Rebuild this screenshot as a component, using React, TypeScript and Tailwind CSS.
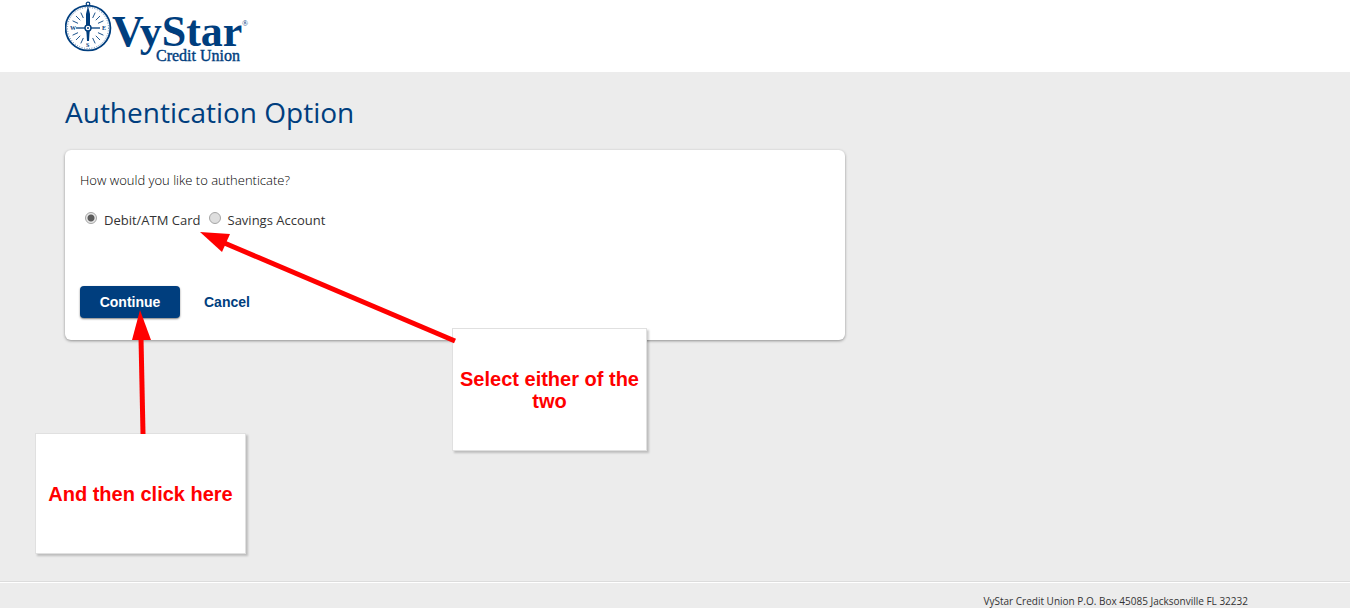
import { useState } from "react";

const options = [
  { id: "card", label: "Debit/ATM Card" },
  { id: "savings", label: "Savings Account" },
];

// Short ticks between the compass points
const ticks = [25, 45, 65, 115, 135, 155, 205, 225, 245, 295, 315, 335];

function Logo() {
  return (
    <svg
      width="186"
      height="64"
      viewBox="0 0 186 64"
      role="img"
      aria-label="VyStar Credit Union"
      fill="#003e7e"
    >
      <g fill="none" stroke="#003e7e">
        <circle cx="23" cy="28" r="22.4" strokeWidth="1.8" />
        <circle cx="23" cy="28" r="20.5" strokeWidth="1" strokeOpacity="0.6" strokeDasharray="1 1.5" />
        <circle cx="23" cy="4" r="1.8" strokeWidth="1.2" />
        {ticks.map((angle) => (
          <path
            key={angle}
            d="M23 11v6"
            strokeWidth="0.8"
            transform={`rotate(${angle} 23 28)`}
          />
        ))}
        <path d="M11 28h24" strokeWidth="1.3" />
      </g>
      <path d="M23 6l2 8v12l-1 15h-2l-1-15v-12z" />
      <circle cx="23" cy="28" r="3" fill="#fff" stroke="#003e7e" strokeWidth="1.4" />
      <circle cx="23" cy="28" r="1" />
      <g className="font-['Liberation_Serif',serif] font-bold">
        <text x="5" y="30" fontSize="6">W</text>
        <text x="37" y="30" fontSize="6">E</text>
        <text x="21" y="47" fontSize="6">S</text>
        <text x="47" y="46" fontSize="44">VyStar</text>
      </g>
      <g className="font-['Liberation_Serif',serif]">
        <text x="91" y="61" fontSize="16" stroke="#003e7e" strokeWidth="0.4">
          Credit Union
        </text>
        <text x="177" y="26" fontSize="8">®</text>
      </g>
    </svg>
  );
}

function Arrows() {
  return (
    <svg
      width="470"
      height="440"
      className="absolute top-0 left-0 pointer-events-none"
      fill="#ff0000"
      stroke="#ff0000"
      aria-hidden="true"
    >
      <path d="M455 341L222 242" strokeWidth="5" />
      <path d="M200 232l30 2-8 18z" stroke="none" />
      <path d="M143 434l-2-96" strokeWidth="5" />
      <path d="M140 310l11 30h-19z" stroke="none" />
    </svg>
  );
}

export default function App() {
  const [selected, setSelected] = useState("card");

  return (
    <div className="relative flex flex-col h-screen overflow-hidden bg-[#ececec] font-['Open_Sans',sans-serif] text-[#333333]">
      <header className="h-[72px] shrink-0 bg-white px-[65px]">
        <Logo />
      </header>

      <main className="grow px-[65px] pt-5">
        <h1 className="text-[28px] leading-10 text-[#003e7e]">
          Authentication Option
        </h1>

        <form
          className="mt-[18px] max-w-[780px] rounded-md bg-white px-[15px] pt-5 pb-[22px] shadow-[0_1px_3px_rgba(0,0,0,0.4)]"
          onSubmit={(e) => e.preventDefault()}
        >
          <fieldset>
            <legend className="text-[13px] leading-5 font-light text-black">
              How would you like to authenticate?
            </legend>
            <div className="mt-5 flex gap-2 pl-[5px]">
              {options.map((option) => (
                <div key={option.id} className="flex items-start gap-[7px]">
                  <input
                    type="radio"
                    id={option.id}
                    name="authentication"
                    checked={selected === option.id}
                    onChange={() => setSelected(option.id)}
                    className="mt-0.5 size-3 appearance-none rounded-full border border-[#a6a6a6] bg-[#dedede] checked:bg-[radial-gradient(circle,#5c5c5c_3px,#e8e8e8_4px)]"
                  />
                  <label
                    htmlFor={option.id}
                    className="text-[13px] leading-5 font-medium"
                  >
                    {option.label}
                  </label>
                </div>
              ))}
            </div>
          </fieldset>

          <div className="mt-14 flex items-center gap-6 font-['Liberation_Sans',sans-serif] text-sm font-bold">
            <button
              type="submit"
              className="h-8 w-[100px] rounded bg-[#003e7e] text-white shadow-[0_1px_2px_rgba(0,0,0,0.5)]"
            >
              Continue
            </button>
            <a href="#" className="text-[#003e7e]">
              Cancel
            </a>
          </div>
        </form>
      </main>

      <footer className="h-[27px] shrink-0 border-t border-[#dcdcdc]">
        <p className="border-t border-white pt-2 pr-[102px] text-right text-[10px] leading-5">
          VyStar Credit Union P.O. Box 45085 Jacksonville FL 32232
        </p>
      </footer>

      <div className="absolute top-[328px] left-[452px] flex h-[123px] w-[195px] items-center justify-center border border-[#e0e0e0] bg-white text-center font-['Liberation_Sans',sans-serif] text-xl leading-[22px] font-bold text-[#ff0000] shadow-[2px_2px_2px_rgba(0,0,0,0.2)]">
        Select either of the two
      </div>
      <div className="absolute top-[433px] left-[35px] flex h-[121px] w-[211px] items-center justify-center border border-[#e0e0e0] bg-white text-center font-['Liberation_Sans',sans-serif] text-xl leading-[22px] font-bold text-[#ff0000] shadow-[2px_2px_2px_rgba(0,0,0,0.2)]">
        And then click here
      </div>
      <Arrows />
    </div>
  );
}
